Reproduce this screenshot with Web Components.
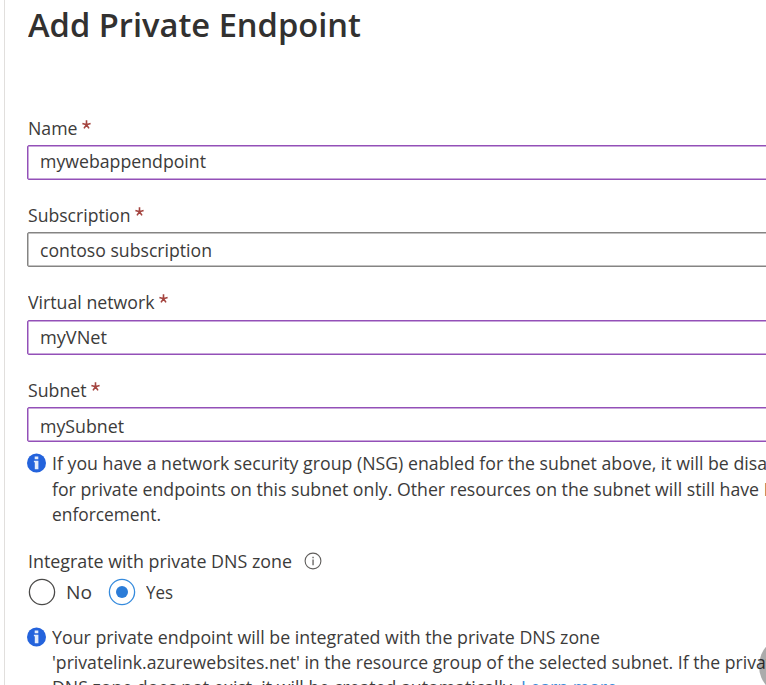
<!DOCTYPE html>
<html lang="en">
<head>
<meta charset="utf-8">
<title>Add Private Endpoint</title>
<style>
html,body{margin:0;height:685px;overflow:hidden;background:#fff}
body{font:18px/26px "Open Sans","Noto Sans",sans-serif;color:#3c3b3a}
</style>
</head>
<body>
<endpoint-panel></endpoint-panel>
<script>
const define = (name, html, ready) => customElements.define(name, class extends HTMLElement {
  connectedCallback() {
    if (this.shadowRoot) return;
    const t = document.createElement('template');
    t.innerHTML = html;
    this.attachShadow({mode: 'open'}).append(t.content.cloneNode(true));
    if (ready) ready(this, this.shadowRoot);
  }
});

// One line of text, condensed or widened to the length given by "w".
define('text-line', `<style>
:host{display:block;white-space:nowrap}
span{display:inline-block;transform-origin:0 50%}
</style><span><slot></slot></span>`, (el, root) => {
  const s = root.querySelector('span');
  const w = +el.getAttribute('w');
  el.style.width = w + 'px';
  s.style.transform = `scaleX(${w / s.getBoundingClientRect().width})`;
});

define('required-mark', `<style>
:host{display:block;width:9px;height:9px;margin-top:5px}
svg{display:block}
</style><svg width="9" height="9" viewBox="0 0 9 9" fill="none" stroke="#a4443f" stroke-width="1.6"><path d="M4.5 .2V4.7M.4 3.4 4.5 4.7 8.6 3.4M2 8.4 4.5 4.7 7 8.4"/></svg>`);

define('form-field', `<style>
:host{display:block;--line:#9350b8}
:host([plain]){--line:#858483}
.label{display:flex;gap:5px;height:26px}
.box{box-sizing:border-box;height:35px;margin-top:4px;width:760px;border:1px solid var(--line);box-shadow:inset 0 0 0 .5px var(--line);border-radius:2px;padding:var(--pad,3px) 0 0 12px}
:host([raised]) .label{height:25px;margin-top:-1px}
:host([raised]) .box{margin-top:6px}
</style><div class="label"><slot name="label"></slot><required-mark></required-mark></div><div class="box"><slot></slot></div>`);

define('info-note', `<style>
:host{display:flex;gap:6px}
svg{display:block;flex:none;margin:3px 0 0 -2px}
.lines{display:flex;flex-direction:column}
::slotted(*){height:var(--pitch,25.7px)}
</style><svg width="20" height="20" viewBox="0 0 20 20"><circle cx="10.5" cy="10" r="9.5" fill="#2463dc"/><path d="M8.7 3.5h3.6v2.8H8.7zM7.9 7.8h4.5v8.4H8.8V9.3h-.9z" fill="#fff" fill-opacity=".88"/></svg><div class="lines"><slot></slot></div>`);

define('radio-option', `<style>
:host{display:flex;align-items:center;height:28px;gap:10px}
svg{display:block}
circle{fill:none;stroke:#4b4a49;stroke-width:1.3}
.dot{display:none}
:host([checked]) circle{stroke:#368bdd}
:host([checked]) .dot{display:block;fill:#2b7cd8;stroke:none}
</style><svg width="28" height="28" viewBox="0 0 28 28"><circle cx="14" cy="14" r="12.6"/><circle class="dot" cx="14" cy="14" r="6"/></svg><slot></slot>`);

define('info-tip', `<style>:host{display:block}svg{display:block}</style>
<svg width="18" height="18" viewBox="0 0 18 18"><circle cx="9" cy="9" r="7.9" fill="none" stroke="#605e5c" stroke-width="1.1"/><path d="M8.4 4.7h1.3v1.5H8.4zM8.4 7.4h1.3v5.8H8.4z" fill="#605e5c"/></svg>`);

define('endpoint-panel', `<style>
:host{display:block;position:relative;box-sizing:border-box;height:685px;margin-left:4px;padding-left:23px;border-left:1px solid #e1dfdd;overflow:hidden}
h1{margin:0;padding-top:2px;height:115px;box-sizing:border-box;font:600 32px/46px "Open Sans","Noto Sans",sans-serif;color:#323130}
.fields{display:grid;grid-template-rows:87px 88px 87px 73px;margin-left:-1px}
.fields text-line[slot]{margin-left:.5px}
.note1{margin-bottom:20.9px}
.row{display:flex;align-items:center;gap:12px;height:26px;margin-left:-.5px}
.radios{display:flex;gap:15.5px;height:28px;margin:4px 0 18px;margin-left:0}
a{color:#3b8bd8}
.bubble{position:absolute;left:754px;top:636px;width:60px;height:60px;border-radius:50%;background:rgba(0,0,0,.33)}
</style>
<h1><text-line w="333">Add Private Endpoint</text-line></h1>
<div class="fields">
<form-field style="--pad:2px"><text-line slot="label" w="49.5">Name</text-line><text-line w="166">mywebappendpoint</text-line></form-field>
<form-field plain style="--pad:4px"><text-line slot="label" w="102.5">Subscription</text-line><text-line w="172">contoso subscription</text-line></form-field>
<form-field raised style="--pad:3px"><text-line slot="label" w="126.5">Virtual network</text-line><text-line w="67">myVNet</text-line></form-field>
<form-field style="--pad:5px"><text-line slot="label" w="58.5">Subnet</text-line><text-line w="84">mySubnet</text-line></form-field>
</div>
<info-note class="note1">
<text-line w="715">If you have a network security group (NSG) enabled for the subnet above, it will be disa</text-line>
<text-line w="725">for private endpoints on this subnet only. Other resources on the subnet will still have N</text-line>
<text-line w="109">enforcement.</text-line>
</info-note>
<div class="row"><text-line w="264">Integrate with private DNS zone</text-line><info-tip></info-tip></div>
<div class="radios"><radio-option><text-line w="26">No</text-line></radio-option><radio-option checked><text-line w="27">Yes</text-line></radio-option></div>
<info-note style="--pitch:25.2px">
<text-line w="548">Your private endpoint will be integrated with the private DNS zone</text-line>
<text-line w="720">'privatelink.azurewebsites.net' in the resource group of the selected subnet. If the privat</text-line>
<text-line w="565">DNS zone does not exist, it will be created automatically. <a>Learn more</a></text-line>
</info-note>
<div class="bubble"></div>`);
</script>
</body>
</html>
